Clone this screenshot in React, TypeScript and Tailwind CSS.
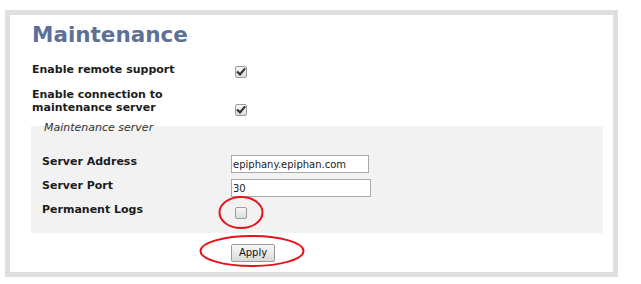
import React from 'react';

const CheckBox = ({ checked, className = '' }: { checked?: boolean; className?: string }) => (
    <div className={`w-[12px] h-[12px] shrink-0 rounded-[2px] border border-[#9c9c9c] bg-gradient-to-b from-[#f7f7f7] to-[#dcdcdc] flex items-center justify-center ${className}`}>
        {checked && (
            <svg width="10" height="10" viewBox="0 0 10 10">
                <path d="M1.8 5.2 L4 7.4 L8.4 2.2" fill="none" stroke="#333" strokeWidth="2.2" strokeLinecap="square" />
            </svg>
        )}
    </div>
);

export default function App() {
    return (
        <div className="relative w-[641px] h-[284px] bg-white pt-[10px] pl-[5px] font-['DejaVu_Sans',Verdana,sans-serif] text-[#1c1c1c]">
            <div className="w-[613px] h-[267px] border-[5px] border-[#dfdfdf] pl-[22px] pt-[7px]">
                <h1 className="text-[21.5px] leading-[26px] font-bold text-[#5d7198]">Maintenance</h1>

                <div className="flex items-start mt-[15px]">
                    <div className="w-[203px] text-[11px] leading-[14px] font-bold">Enable remote support</div>
                    <CheckBox checked className="mt-[3px]" />
                </div>

                <div className="flex items-start mt-[10px]">
                    <div className="w-[203px] text-[11px] leading-[13px] font-bold">Enable connection to<br />maintenance server</div>
                    <CheckBox checked className="mt-[16px]" />
                </div>

                <div className="flow-root w-[572px] -ml-px mt-[10px] bg-[#f2f2f2] pl-[11px] pb-[14px]">
                    <div className="-mt-[5px] ml-[2px] text-[11px] leading-[13px] italic text-[#333]">Maintenance server</div>

                    <div className="flex items-start mt-[21px]">
                        <div className="w-[189px] text-[11px] leading-[14px] font-bold">Server Address</div>
                        <input readOnly defaultValue="epiphany.epiphan.com" className="w-[138px] h-[18px] border border-[#a9a9a9] bg-white px-[1px] text-[10px] text-[#222] outline-none" />
                    </div>
                    <div className="flex items-start mt-[6px]">
                        <div className="w-[189px] text-[11px] leading-[14px] font-bold">Server Port</div>
                        <input readOnly defaultValue="30" className="w-[140px] h-[18px] border border-[#a9a9a9] bg-white px-[1px] text-[10px] text-[#222] outline-none" />
                    </div>
                    <div className="flex items-start mt-[6px]">
                        <div className="w-[189px] text-[11px] leading-[14px] font-bold">Permanent Logs</div>
                        <CheckBox className="ml-[4px] mt-[4px]" />
                    </div>
                </div>

                <button className="mt-[11px] ml-[199px] w-[44px] h-[18px] rounded-[2px] border border-[#9a9a9a] bg-gradient-to-b from-[#f8f8f8] to-[#dadada] text-[10px] leading-[16px] text-[#111]">Apply</button>
            </div>

            {/* red annotation circles */}
            <svg className="absolute left-0 top-0 pointer-events-none" width="641" height="284">
                <ellipse cx="241" cy="212.5" rx="21.5" ry="15.5" fill="none" stroke="#e5141c" strokeWidth="2" />
                <ellipse cx="252" cy="251" rx="51.5" ry="15" fill="none" stroke="#e5141c" strokeWidth="2" />
            </svg>
        </div>
    );
}
